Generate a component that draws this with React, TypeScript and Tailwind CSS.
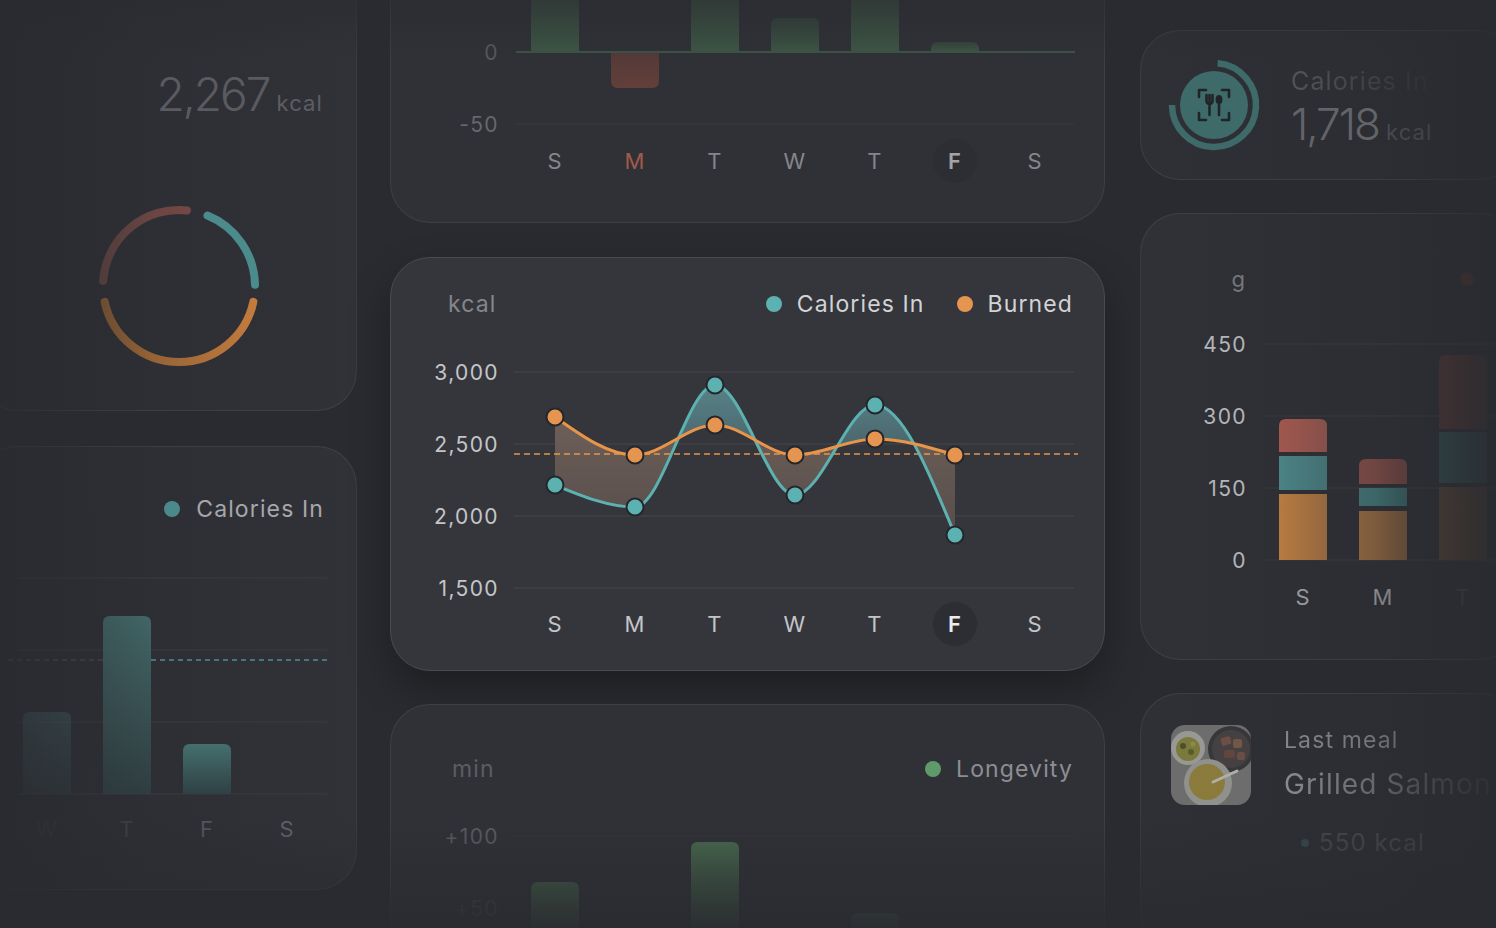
import React from 'react';

type P = [number, number];
type Seg = { p0: P; c1: P; c2: P; p1: P };

// monotone-x cubic, same idea as d3.curveMonotoneX
function monotone(pts: P[]): Seg[] {
  const n = pts.length;
  const h: number[] = [];
  const s: number[] = [];
  for (let i = 0; i < n - 1; i++) {
    h[i] = pts[i + 1][0] - pts[i][0];
    s[i] = (pts[i + 1][1] - pts[i][1]) / h[i];
  }
  const t: number[] = [];
  for (let i = 1; i < n - 1; i++) {
    const p = (s[i - 1] * h[i] + s[i] * h[i - 1]) / (h[i - 1] + h[i]);
    t[i] =
      (Math.sign(s[i - 1]) + Math.sign(s[i])) *
        Math.min(Math.abs(s[i - 1]), Math.abs(s[i]), 0.5 * Math.abs(p)) || 0;
  }
  t[0] = (3 * s[0] - t[1]) / 2;
  t[n - 1] = (3 * s[n - 2] - t[n - 2]) / 2;
  const segs: Seg[] = [];
  for (let i = 0; i < n - 1; i++) {
    const dx = h[i] / 3;
    const [x0, y0] = pts[i];
    const [x1, y1] = pts[i + 1];
    segs.push({ p0: pts[i], c1: [x0 + dx, y0 + dx * t[i]], c2: [x1 - dx, y1 - dx * t[i + 1]], p1: pts[i + 1] });
  }
  return segs;
}

const pt = (p: P) => `${p[0].toFixed(2)} ${p[1].toFixed(2)}`;
const linePath = (segs: Seg[]) =>
  `M${pt(segs[0].p0)} ` + segs.map((s) => `C${pt(s.c1)} ${pt(s.c2)} ${pt(s.p1)}`).join(' ');
const backPath = (segs: Seg[]) =>
  `L${pt(segs[segs.length - 1].p1)} ` +
  [...segs].reverse().map((s) => `C${pt(s.c2)} ${pt(s.c1)} ${pt(s.p0)}`).join(' ');

function arc(cx: number, cy: number, r: number, a0: number, a1: number) {
  const at = (a: number): P => [cx + r * Math.sin((a * Math.PI) / 180), cy - r * Math.cos((a * Math.PI) / 180)];
  const large = a1 - a0 > 180 ? 1 : 0;
  return `M${pt(at(a0))} A${r} ${r} 0 ${large} 1 ${pt(at(a1))}`;
}

function roundTop(x: number, y: number, w: number, h: number, r: number) {
  return `M${x} ${y + h} V${y + r} Q${x} ${y} ${x + r} ${y} H${x + w - r} Q${x + w} ${y} ${x + w} ${y + r} V${y + h} Z`;
}
function roundBottom(x: number, y: number, w: number, h: number, r: number) {
  return `M${x} ${y} V${y + h - r} Q${x} ${y + h} ${x + r} ${y + h} H${x + w - r} Q${x + w} ${y + h} ${x + w} ${y + h - r} V${y} Z`;
}

const DAYS = ['S', 'M', 'T', 'W', 'T', 'F', 'S'];
const dayX = (i: number) => 164 + i * 80;

// tick labels are wide in the design, spacing makes Inter read closer to it
const tick = { fontSize: 21, letterSpacing: '1.4px' } as const;

function MainChart() {
  const teal: P[] = [165, 187, 65, 175, 85, 215].map((y, i) => [dayX(i), y]);
  const orange: P[] = [97, 135, 105, 135, 119, 135].map((y, i) => [dayX(i), y]);
  const tSegs = monotone(teal);
  const oSegs = monotone(orange);
  const oLine = linePath(oSegs);
  const between = `${oLine} ${backPath(tSegs)} Z`;
  const above = `${oLine} L564 0 L164 0 Z`;
  const below = `${oLine} L564 352 L164 352 Z`;

  return (
    <svg width="715" height="352" className="block">
      <defs>
        <linearGradient id="tealFill" x1="0" y1="60" x2="0" y2="200" gradientUnits="userSpaceOnUse">
          <stop offset="0" stopColor="#58858a" />
          <stop offset="1" stopColor="#3b454c" />
        </linearGradient>
        <linearGradient id="brownFill" x1="0" y1="95" x2="0" y2="215" gradientUnits="userSpaceOnUse">
          <stop offset="0" stopColor="#6e5f58" />
          <stop offset="1" stopColor="#564d4b" />
        </linearGradient>
        <clipPath id="aboveOrange">
          <path d={above} />
        </clipPath>
        <clipPath id="belowOrange">
          <path d={below} />
        </clipPath>
      </defs>

      {[52, 124, 196, 268].map((y) => (
        <line key={y} x1="123" x2="683" y1={y} y2={y} stroke="#45464c" strokeWidth="1" />
      ))}
      {['3,000', '2,500', '2,000', '1,500'].map((l, i) => (
        <text key={l} x="108" y={52 + i * 72} textAnchor="end" dominantBaseline="central" style={tick} fill="#c4c5c9">
          {l}
        </text>
      ))}

      <path d={between} fill="url(#tealFill)" clipPath="url(#aboveOrange)" />
      <path d={between} fill="url(#brownFill)" clipPath="url(#belowOrange)" />

      <line x1="123" x2="687" y1="134" y2="134" stroke="#e8954a" strokeWidth="1.6" strokeDasharray="6 4" />

      <path d={linePath(tSegs)} fill="none" stroke="#5cb2b1" strokeWidth="3" />
      <path d={oLine} fill="none" stroke="#e8954a" strokeWidth="3" />

      {orange.map((p, i) => (
        <circle key={'o' + i} cx={p[0]} cy={p[1]} r="8.5" fill="#e5954f" stroke="#25262b" strokeWidth="2" />
      ))}
      {teal.map((p, i) => (
        <circle key={'t' + i} cx={p[0]} cy={p[1]} r="8.5" fill="#5cb2b1" stroke="#25262b" strokeWidth="2" />
      ))}

      <circle cx="564" cy="304" r="22" fill="#2d2e34" />
      {DAYS.map((d, i) => (
        <text
          key={i}
          x={dayX(i)}
          y="304"
          textAnchor="middle"
          dominantBaseline="central"
          fontSize="22"
          fontWeight={i === 5 ? 600 : 400}
          fill={i === 5 ? '#ececee' : '#c4c5c9'}
        >
          {d}
        </text>
      ))}
    </svg>
  );
}

function BalanceChart() {
  // bars above/below zero, top of card is off screen
  const bars = [
    { x: 140, top: 10 },
    { x: 300, top: 5 },
    { x: 380, top: 94 },
    { x: 460, top: 12 },
    { x: 540, top: 118 },
  ];
  return (
    <svg width="715" height="300" className="block">
      <defs>
        <linearGradient id="gBar" x1="0" y1="0" x2="0" y2="1">
          <stop offset="0" stopColor="#34453c" />
          <stop offset="1" stopColor="#3e5846" />
        </linearGradient>
        <linearGradient id="rBar" x1="0" y1="0" x2="0" y2="1">
          <stop offset="0" stopColor="#533a38" />
          <stop offset="1" stopColor="#633f39" />
        </linearGradient>
      </defs>
      <line x1="123" x2="683" y1="200" y2="200" stroke="#393a40" strokeWidth="1" />
      {bars.map((b) => (
        <path key={b.x} d={roundTop(b.x, b.top, 48, 128 - b.top, 7)} fill="url(#gBar)" />
      ))}
      <path d={roundBottom(220, 129, 48, 35, 7)} fill="url(#rBar)" />
      <line x1="125" x2="684" y1="128" y2="128" stroke="#3c5546" strokeWidth="2" />
      <text x="108" y="128" textAnchor="end" dominantBaseline="central" style={tick} fill="#58595e">
        0
      </text>
      <text x="108" y="200" textAnchor="end" dominantBaseline="central" style={tick} fill="#66676c">
        -50
      </text>
      <circle cx="564" cy="237" r="22" fill="#2d2e33" />
      {DAYS.map((d, i) => (
        <text
          key={i}
          x={dayX(i)}
          y="237"
          textAnchor="middle"
          dominantBaseline="central"
          fontSize="22"
          fontWeight={i === 5 ? 600 : 400}
          fill={i === 1 ? '#a25a4a' : i === 5 ? '#a3a4a8' : '#85868b'}
        >
          {d}
        </text>
      ))}
    </svg>
  );
}

function LongevityChart() {
  return (
    <svg width="715" height="200" className="block">
      <defs>
        <linearGradient id="lBar" x1="0" y1="0" x2="0" y2="1">
          <stop offset="0" stopColor="#4a6d50" />
          <stop offset="1" stopColor="#2f3a35" />
        </linearGradient>
      </defs>
      <line x1="123" x2="683" y1="51" y2="51" stroke="#36373d" strokeWidth="1" />
      <line x1="123" x2="683" y1="123" y2="123" stroke="#34353b" strokeWidth="1" />
      <text x="108" y="51" textAnchor="end" dominantBaseline="central" style={tick} fill="#5c5d62">
        +100
      </text>
      <text x="108" y="123" textAnchor="end" dominantBaseline="central" style={tick} fill="#45464b">
        +50
      </text>
      <path d={roundTop(140, 97, 48, 120, 7)} fill="url(#lBar)" opacity="0.8" />
      <path d={roundTop(300, 57, 48, 160, 7)} fill="url(#lBar)" />
      <path d={roundTop(460, 128, 48, 80, 7)} fill="url(#lBar)" opacity="0.55" />
    </svg>
  );
}

function Donut() {
  return (
    <svg width="180" height="180" className="ml-[111px] mt-[79px] block">
      <defs>
        <linearGradient id="orArc" x1="0" y1="0" x2="1" y2="0">
          <stop offset="0" stopColor="#7f5734" />
          <stop offset="1" stopColor="#c27b3d" />
        </linearGradient>
        <linearGradient id="mvArc" x1="0" y1="0" x2="1" y2="0">
          <stop offset="0" stopColor="#5d4240" />
          <stop offset="1" stopColor="#744744" />
        </linearGradient>
      </defs>
      <g fill="none" strokeWidth="8" strokeLinecap="round">
        <path d={arc(90, 90, 76, 22, 89)} stroke="#4b8b8b" />
        <path d={arc(90, 90, 76, 102, 258)} stroke="url(#orArc)" />
        <path d={arc(90, 90, 76, 274, 366)} stroke="url(#mvArc)" />
      </g>
    </svg>
  );
}

function CaloriesBars() {
  const grid = [53, 125, 197, 269];
  return (
    <svg width="380" height="366" className="block">
      <defs>
        <linearGradient id="cBar" x1="0" y1="0" x2="0" y2="1">
          <stop offset="0" stopColor="#456f6e" />
          <stop offset="1" stopColor="#2f4043" />
        </linearGradient>
      </defs>
      {grid.map((y) => (
        <line key={y} x1="40" x2="349" y1={y} y2={y} stroke="#3a3b41" strokeWidth="1" />
      ))}
      <path d={roundTop(45, 187, 48, 82, 7)} fill="url(#cBar)" opacity="0.45" />
      <path d={roundTop(125, 91, 48, 178, 7)} fill="url(#cBar)" opacity="0.85" />
      <path d={roundTop(205, 219, 48, 50, 7)} fill="url(#cBar)" />
      <line x1="30" x2="125" y1="135" y2="135" stroke="#44484c" strokeWidth="1.5" strokeDasharray="5 4" />
      <line x1="173" x2="350" y1="135" y2="135" stroke="#4f8f92" strokeWidth="1.5" strokeDasharray="5 4" />
      {[
        ['W', 69, '#34353a'],
        ['T', 149, '#3f4045'],
        ['F', 229, '#55565b'],
        ['S', 309, '#606166'],
      ].map(([d, x, c]) => (
        <text key={x as number} x={x as number} y="304" textAnchor="middle" dominantBaseline="central" fontSize="22" fill={c as string}>
          {d}
        </text>
      ))}
    </svg>
  );
}

function MacroBars() {
  const bars = [
    { x: 138, o: [199, 265], t: [161, 195], r: [124, 157], c: ['#b77a41', '#4b8284', '#a0574e'], c2: ['#93673f', '#436f71', '#85504a'] },
    { x: 218, o: [216, 265], t: [193, 211], r: [164, 189], c: ['#86603f', '#3f6b6c', '#764845'], c2: ['#6b5039', '#355a5c', '#623f3d'] },
    { x: 298, o: [192, 265], t: [137, 188], r: [60, 134], c: ['#4d3d33', '#2f474b', '#4a3333'], c2: ['#3c3430', '#2c3a3d', '#3a2f30'] },
  ];
  return (
    <svg width="380" height="366" className="block">
      <defs>
        {bars.map((b, i) =>
          b.c.map((c, j) => (
            <linearGradient key={`${i}${j}`} id={`m${i}${j}`} x1="0" y1="0" x2="1" y2="0">
              <stop offset="0" stopColor={c} />
              <stop offset="1" stopColor={b.c2[j]} />
            </linearGradient>
          ))
        )}
      </defs>
      {[49, 121, 193, 265].map((y) => (
        <line key={y} x1="125" x2="380" y1={y} y2={y} stroke="#393a40" strokeWidth="1" />
      ))}
      {['450', '300', '150', '0'].map((l, i) => (
        <text key={l} x="106" y={49 + i * 72} textAnchor="end" dominantBaseline="central" style={tick} fill="#b4b5b9">
          {l}
        </text>
      ))}
      {bars.map((b, i) => (
        <g key={i}>
          <rect x={b.x} y={b.o[0]} width="48" height={b.o[1] - b.o[0]} fill={`url(#m${i}0)`} />
          <rect x={b.x} y={b.t[0]} width="48" height={b.t[1] - b.t[0]} fill={`url(#m${i}1)`} />
          <path d={roundTop(b.x, b.r[0], 48, b.r[1] - b.r[0], 7)} fill={`url(#m${i}2)`} />
        </g>
      ))}
      {[
        ['S', 162, '#97989d'],
        ['M', 242, '#85868b'],
        ['T', 322, '#3c3d42'],
      ].map(([d, x, c]) => (
        <text key={x as number} x={x as number} y="302" textAnchor="middle" dominantBaseline="central" fontSize="22" fill={c as string}>
          {d}
        </text>
      ))}
    </svg>
  );
}

function MealIcon() {
  return (
    <svg width="100" height="100" viewBox="-50 -50 100 100" className="block shrink-0">
      <path d={arc(0, 0, 42, 5, 270)} fill="none" stroke="#3e6a6a" strokeWidth="6.5" />
      <circle r="34" fill="#3e6a6a" />
      <g fill="none" stroke="#202327" strokeWidth="2.6" strokeLinecap="round" strokeLinejoin="round">
        <path d="M-15 -8 V-15 H-8 M8 -15 H15 V-8 M15 8 V15 H8 M-8 15 H-15 V8" />
        <path d="M-4.5 -10 V-3 M-7.5 -10 V-4 A3 3 0 0 0 -1.5 -4 V-10 M-4.5 -1 V10" />
        <path d="M5 -1 V10" />
      </g>
      <ellipse cx="5" cy="-5.5" rx="3.4" ry="4.6" fill="#202327" />
    </svg>
  );
}

function FoodPhoto() {
  return (
    <svg width="80" height="80" viewBox="0 0 80 80" className="block shrink-0 opacity-80">
      <defs>
        <clipPath id="foodClip">
          <rect width="80" height="80" rx="14" />
        </clipPath>
      </defs>
      <g clipPath="url(#foodClip)">
        <rect width="80" height="80" fill="#7c7d7a" />
        <circle cx="17" cy="23" r="17" fill="#b3b3ad" />
        <circle cx="17" cy="24" r="12" fill="#8f8c3d" />
        <circle cx="12" cy="21" r="3" fill="#4f5a2a" />
        <circle cx="20" cy="27" r="3" fill="#5d6a30" />
        <circle cx="22" cy="19" r="2.5" fill="#a8a24a" />
        <circle cx="60" cy="24" r="23" fill="#3a3a3c" />
        <circle cx="60" cy="24" r="19" fill="#4b4545" />
        <rect x="50" y="12" width="10" height="8" rx="2" fill="#7d5646" transform="rotate(-15 55 16)" />
        <rect x="62" y="14" width="9" height="9" rx="2" fill="#86604c" />
        <rect x="53" y="25" width="11" height="8" rx="2" fill="#6f4c3f" />
        <rect x="66" y="27" width="8" height="8" rx="2" fill="#7a5647" />
        <circle cx="37" cy="58" r="24" fill="#a9a9a4" />
        <circle cx="36" cy="57" r="18" fill="#a28f3e" />
        <line x1="42" y1="57" x2="66" y2="46" stroke="#cfcfca" strokeWidth="3" strokeLinecap="round" />
      </g>
    </svg>
  );
}

const card = 'rounded-[40px] border border-white/[0.07]';

export default function App() {
  return (
    <div className="relative h-[928px] w-[1496px] overflow-hidden bg-[#2a2b30] font-['Inter',sans-serif] tracking-[0.07em]">
      <div className="ml-[-23px] flex items-start">
        {/* left column */}
        <div className="mt-[-49px] flex w-[380px] shrink-0 flex-col gap-[35px]">
          <div className={`${card} h-[460px] bg-linear-to-r from-[#2b2c31] to-[#313238] pt-[119px]`}>
            <div className="flex items-baseline justify-end gap-[7px] pr-[33px] leading-none">
              <span className="text-[46px] font-light tracking-[-2px] text-[#5a5b60]">2,267</span>
              <span className="text-[22px] text-[#5d5e63]">kcal</span>
            </div>
            <Donut />
          </div>

          <div className={`${card} h-[444px] bg-linear-to-r from-[#2b2c31] to-[#313238] pt-[46px]`}>
            <div className="flex h-[32px] items-center justify-end gap-[16px] pr-[32px]">
              <span className="h-[16px] w-[16px] rounded-full bg-[#4b8a8a]" />
              <span className="text-[23px] text-[#a6a7ab]">Calories In</span>
            </div>
            <CaloriesBars />
          </div>
        </div>

        {/* center column */}
        <div className="ml-[33px] mt-[-77px] flex w-[715px] shrink-0 flex-col">
          <div className={`${card} h-[300px] overflow-hidden bg-[#303137]`}>
            <BalanceChart />
          </div>

          <div className="mt-[34px] h-[414px] rounded-[40px] border border-[#4a4b51] bg-[#35363c] pt-[30px] shadow-[0_18px_40px_rgba(0,0,0,0.3)]">
            <div className="flex h-[32px] items-center pl-[57px] pr-[31px]">
              <span className="text-[23px] text-[#85868b]">kcal</span>
              <div className="ml-auto flex items-center gap-[15px]">
                <span className="h-[16px] w-[16px] rounded-full bg-[#5cb2b1]" />
                <span className="text-[23px] text-[#d2d3d6]">Calories In</span>
                <span className="ml-[17px] h-[16px] w-[16px] rounded-full bg-[#e5954f]" />
                <span className="text-[23px] text-[#d2d3d6]">Burned</span>
              </div>
            </div>
            <MainChart />
          </div>

          <div className={`${card} mt-[33px] h-[300px] overflow-hidden bg-[#303137] pt-[48px]`}>
            <div className="flex h-[32px] items-center pl-[61px] pr-[31px]">
              <span className="text-[23px] text-[#5c5d62]">min</span>
              <div className="ml-auto flex items-center gap-[15px]">
                <span className="h-[16px] w-[16px] rounded-full bg-[#5f9a6a]" />
                <span className="text-[23px] text-[#8d8e93]">Longevity</span>
              </div>
            </div>
            <LongevityChart />
          </div>
        </div>

        {/* right column */}
        <div className="ml-[35px] mt-[30px] flex w-[380px] shrink-0 flex-col gap-[33px]">
          <div className={`${card} flex h-[150px] items-center bg-linear-to-r from-[#2f3036] to-[#2b2c31] pl-[23px]`}>
            <MealIcon />
            <div className="ml-[27px] flex flex-col">
              <span className="bg-linear-to-r from-[#54555a] to-[#303136] bg-clip-text text-[25px] leading-[34px] text-transparent">
                Calories In
              </span>
              <div className="mt-[4px] flex items-baseline gap-[7px] leading-none">
                <span className="text-[44px] font-light tracking-[-2px] text-[#636469]">1,718</span>
                <span className="text-[22px] text-[#4a4b50]">kcal</span>
              </div>
            </div>
          </div>

          <div className={`${card} h-[447px] bg-linear-to-r from-[#303137] to-[#2b2c31] pt-[49px]`}>
            <div className="flex h-[32px] items-center">
              <span className="w-[105px] text-right text-[22px] text-[#76777c]">g</span>
              <span className="ml-[214px] h-[14px] w-[14px] rounded-full bg-[#44302f]" />
            </div>
            <MacroBars />
          </div>

          <div className={`${card} flex h-[260px] items-start bg-linear-to-r from-[#2f3036] to-[#2b2c31] pl-[30px] pt-[31px]`}>
            <FoodPhoto />
            <div className="ml-[33px] flex flex-col">
              <span className="mt-[-2px] bg-linear-to-r from-[#85868b] to-[#5a5b60] bg-clip-text text-[23px] leading-[34px] text-transparent">
                Last meal
              </span>
              <span className="mt-[8px] whitespace-nowrap bg-linear-to-r from-[#8a8b90] to-[#3a3b40] bg-clip-text text-[28px] leading-[38px] text-transparent">
                Grilled Salmon
              </span>
              <div className="ml-[17px] mt-[22px] flex items-center gap-[10px]">
                <span className="h-[8px] w-[8px] rounded-full bg-[#344a4a]" />
                <span className="text-[24px] text-[#45464b]">550 kcal</span>
              </div>
            </div>
          </div>
        </div>
      </div>

      {/* edge fades */}
      <div className="pointer-events-none absolute inset-y-0 left-0 w-[150px] bg-linear-to-r from-[#2a2b30]/70 to-transparent" />
      <div className="pointer-events-none absolute inset-y-0 right-0 w-[120px] bg-linear-to-l from-[#2a2b30]/70 to-transparent" />
      <div className="pointer-events-none absolute inset-x-0 top-0 h-[60px] bg-linear-to-b from-[#2a2b30]/60 to-transparent" />
      <div className="pointer-events-none absolute inset-x-0 bottom-0 h-[110px] bg-linear-to-t from-[#2a2b30]/90 to-transparent" />
    </div>
  );
}
